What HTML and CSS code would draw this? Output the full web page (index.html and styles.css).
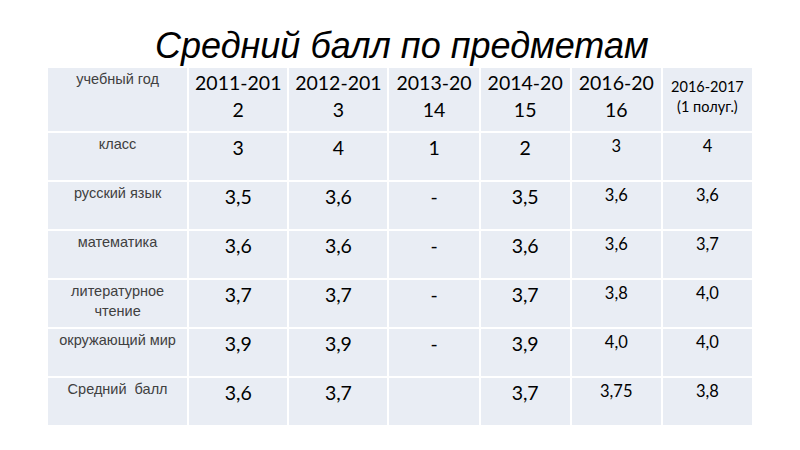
FILE: index.html
```html
<!DOCTYPE html>
<html>
<head>
	<title>Средний балл по предметам</title>
	<meta charset="utf-8">
	<link rel="stylesheet" href="styles.css">
</head>
<body>

<div id="slide">
	<h1 class="title">Средний балл по предметам</h1>

	<table class="marks">
		<colgroup>
			<col class="c_name">
			<col class="c_big">
			<col class="c_big">
			<col class="c_mid">
			<col class="c_mid">
			<col class="c_mid">
			<col class="c_mid">
		</colgroup>
		<tr class="r_head">
			<td class="name">учебный год</td>
			<td class="big">2011-201<br>2</td>
			<td class="big">2012-201<br>3</td>
			<td class="big">2013-20<br>14</td>
			<td class="big">2014-20<br>15</td>
			<td class="big">2016-20<br>16</td>
			<td class="tiny">2016-2017<br>(1 полуг.)</td>
		</tr>
		<tr>
			<td class="name">класс</td>
			<td class="big">3</td>
			<td class="big">4</td>
			<td class="big">1</td>
			<td class="big">2</td>
			<td class="small">3</td>
			<td class="small">4</td>
		</tr>
		<tr>
			<td class="name">русский язык</td>
			<td class="big">3,5</td>
			<td class="big">3,6</td>
			<td class="big">-</td>
			<td class="big">3,5</td>
			<td class="small">3,6</td>
			<td class="small">3,6</td>
		</tr>
		<tr>
			<td class="name">математика</td>
			<td class="big">3,6</td>
			<td class="big">3,6</td>
			<td class="big">-</td>
			<td class="big">3,6</td>
			<td class="small">3,6</td>
			<td class="small">3,7</td>
		</tr>
		<tr>
			<td class="name">литературное<br>чтение</td>
			<td class="big">3,7</td>
			<td class="big">3,7</td>
			<td class="big">-</td>
			<td class="big">3,7</td>
			<td class="small">3,8</td>
			<td class="small">4,0</td>
		</tr>
		<tr>
			<td class="name">окружающий мир</td>
			<td class="big">3,9</td>
			<td class="big">3,9</td>
			<td class="big">-</td>
			<td class="big">3,9</td>
			<td class="small">4,0</td>
			<td class="small">4,0</td>
		</tr>
		<tr>
			<td class="name">Средний&nbsp; балл</td>
			<td class="big">3,6</td>
			<td class="big">3,7</td>
			<td class="big"></td>
			<td class="big">3,7</td>
			<td class="small">3,75</td>
			<td class="small">3,8</td>
		</tr>
	</table>
</div>

</body>
</html>
```

FILE: styles.css
```css
body{
	margin: 0;
	background: #fff;
}
#slide{
	width: 800px;
	height: 450px;
	overflow: hidden;
	display: flex;
	flex-direction: column;
	align-items: flex-start;
}
.title{
	margin: 23px 0 0 155px;
	height: 43px;
	font-family: "Liberation Sans", Arial, sans-serif;
	font-style: italic;
	font-weight: normal;
	font-size: 36px;
	line-height: 46px;
	color: #000;
	white-space: nowrap;
}
.marks{
	margin-left: 46px;
	border-collapse: collapse;
	table-layout: fixed;
	width: 708px;
}
.c_name{ width: 141px; }
.c_big{ width: 100px; }
.c_mid{ width: 91px; }

.marks td{
	background: #e9edf4;
	border: 2px solid #fff;
	text-align: center;
	vertical-align: top;
	height: 45px;
	padding: 0;
	color: #000;
}
.marks tr.r_head td{
	height: 54px;
}
.marks td.name{
	font-family: "Liberation Sans", Arial, sans-serif;
	font-size: 14.5px;
	line-height: 20px;
	color: #404040;
	padding-top: 1px;
}
.marks td.big{
	font-family: Lato, "Open Sans", sans-serif;
	font-size: 19.5px;
	line-height: 26px;
	padding-top: 2px;
}
.marks tr.r_head td.big{
	line-height: 27px;
	padding-top: 1px;
}
.marks td.small{
	font-family: Lato, "Open Sans", sans-serif;
	font-size: 16.5px;
	line-height: 22px;
	padding-top: 2px;
}
.marks td.tiny{
	font-family: Lato, "Open Sans", sans-serif;
	font-size: 14.5px;
	line-height: 20px;
	padding-top: 9px;
}
```
